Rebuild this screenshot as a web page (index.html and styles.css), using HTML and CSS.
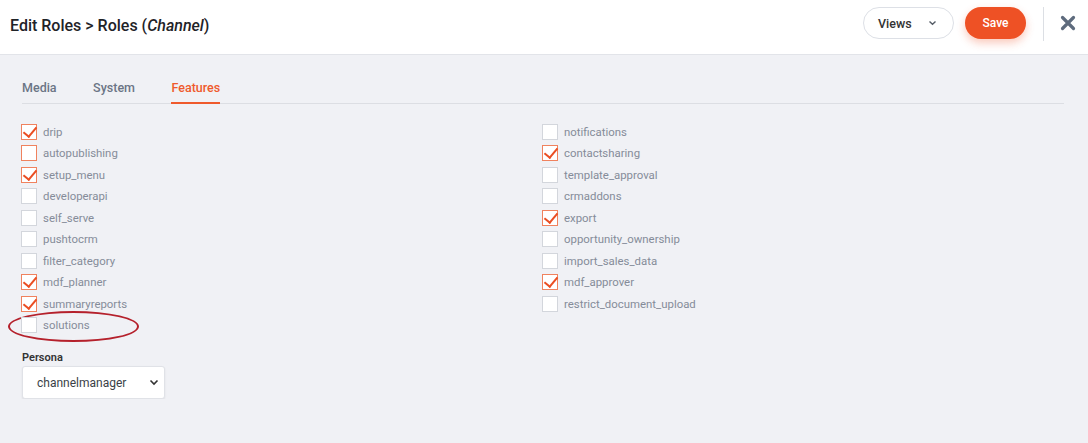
FILE: index.html
```html
<!DOCTYPE html>
<html lang="en">
<head>
    <meta charset="UTF-8">
    <title>Edit Roles</title>
    <link rel="stylesheet" href="styles.css">
</head>
<body>
    <!-- Top bar -->
    <div class="topbar">
        <h1 class="title">Edit Roles &gt; Roles (<em>Channel</em>)</h1>
        <div class="actions">
            <button class="btn-views">Views
                <svg width="9" height="6" viewBox="0 0 9 6"><path d="M1.5 1.5 L4.5 4.3 L7.5 1.5" fill="none" stroke="#555c66" stroke-width="1.4"/></svg>
            </button>
            <button class="btn-save">Save</button>
            <span class="divider"></span>
            <button class="btn-close" aria-label="Close">
                <svg width="16" height="16" viewBox="0 0 16 16"><path d="M2.5 2.5 L13.5 13.5 M13.5 2.5 L2.5 13.5" stroke="#5e6b7d" stroke-width="3.2" stroke-linecap="round"/></svg>
            </button>
        </div>
    </div>

    <div class="content">
        <div class="tabs">
            <a class="tab">Media</a>
            <a class="tab">System</a>
            <a class="tab active">Features</a>
        </div>

        <div class="features">
            <div class="col">
                <label class="feature"><span class="box checked"></span>drip</label>
                <label class="feature"><span class="box focus"></span>autopublishing</label>
                <label class="feature"><span class="box checked"></span>setup_menu</label>
                <label class="feature"><span class="box"></span>developerapi</label>
                <label class="feature"><span class="box"></span>self_serve</label>
                <label class="feature"><span class="box"></span>pushtocrm</label>
                <label class="feature"><span class="box"></span>filter_category</label>
                <label class="feature"><span class="box checked"></span>mdf_planner</label>
                <label class="feature"><span class="box checked"></span>summaryreports</label>
                <label class="feature marked"><span class="box"></span>solutions</label>
            </div>
            <div class="col">
                <label class="feature"><span class="box"></span>notifications</label>
                <label class="feature"><span class="box checked"></span>contactsharing</label>
                <label class="feature"><span class="box"></span>template_approval</label>
                <label class="feature"><span class="box"></span>crmaddons</label>
                <label class="feature"><span class="box checked"></span>export</label>
                <label class="feature"><span class="box"></span>opportunity_ownership</label>
                <label class="feature"><span class="box"></span>import_sales_data</label>
                <label class="feature"><span class="box checked"></span>mdf_approver</label>
                <label class="feature"><span class="box"></span>restrict_document_upload</label>
            </div>
        </div>

        <div class="persona">
            <div class="persona-label">Persona</div>
            <div class="select">
                <span>channelmanager</span>
                <svg width="10" height="7" viewBox="0 0 10 7"><path d="M1.5 1.5 L5 5 L8.5 1.5" fill="none" stroke="#333" stroke-width="1.6"/></svg>
            </div>
        </div>
    </div>
</body>
</html>
```

FILE: styles.css
```css
body {
    margin: 0;
    font-family: Roboto, "Liberation Sans", sans-serif;
    background: #f0f1f5;
    color: #333;
}

/* Top bar */
.topbar {
    height: 54px;
    background: #fff;
    border-bottom: 1px solid #e2e4e9;
    display: flex;
    align-items: center;
    justify-content: space-between;
    padding: 0 12px 0 10px;
}

.title {
    margin: 0;
    font-size: 16px;
    font-weight: 500;
    color: #1f2328;
    position: relative;
    top: -2px;
}

.title em { font-style: italic; }

.actions {
    display: flex;
    align-items: center;
    height: 100%;
}

.btn-views {
    width: 91px;
    height: 32px;
    border: 1px solid #dde0e6;
    border-radius: 16px;
    background: #fff;
    font-family: inherit;
    font-size: 12.5px;
    font-weight: 500;
    color: #333;
    display: flex;
    align-items: center;
    justify-content: space-between;
    padding: 0 16px 0 14px;
    margin-top: -8px;
}

.btn-save {
    width: 61px;
    height: 32px;
    margin-left: 11px;
    margin-top: -8px;
    border: none;
    border-radius: 16px;
    background: #ee5125;
    color: #fff;
    font-family: inherit;
    font-size: 12px;
    font-weight: 500;
    box-shadow: 0 4px 8px rgba(238, 81, 37, 0.3);
}

.divider {
    width: 1px;
    height: 34px;
    background: #dcdfe4;
    margin: -6px 0 0 17px;
}

.btn-close {
    border: none;
    background: none;
    padding: 0;
    margin: -8px 0 0 16px;
    display: flex;
}

/* Main area */
.content {
    padding: 25px 24px 0 21px;
}

.tabs {
    display: flex;
    gap: 36.5px;
    border-bottom: 1px solid #dcdee3;
    margin-left: 1px;
}

.tab {
    font-size: 12.5px;
    font-weight: 500;
    color: #6b7585;
    padding-bottom: 7px;
    border-bottom: 2px solid transparent;
    margin-bottom: -1px;
}

.tab.active {
    color: #ef5a2c;
    border-bottom-color: #ef5a2c;
}

.features {
    display: grid;
    grid-template-columns: 521px 521px;
    margin-top: 17px;
}

.feature {
    display: flex;
    align-items: center;
    height: 21.5px;
    font-size: 11.4px;
    color: #858c99;
    position: relative;
}

.box {
    width: 14px;
    height: 14px;
    border: 1px solid #d3d6dc;
    background: #fff;
    margin-right: 6px;
    position: relative;
    flex-shrink: 0;
}

.box.focus { border-color: #f0825e; }

.box.checked { border-color: #f0825e; }

.box.checked::after {
    content: "";
    position: absolute;
    left: 4px;
    top: -1px;
    width: 6px;
    height: 11px;
    border-right: 2px solid #ea4d22;
    border-bottom: 2px solid #ea4d22;
    transform: rotate(40deg);
}

/* red annotation ring around "solutions" */
.feature.marked::before {
    content: "";
    position: absolute;
    left: -13px;
    top: -4px;
    width: 127px;
    height: 27px;
    border: 2px solid #b5212c;
    border-radius: 50%;
}

.persona {
    margin-top: 15px;
    margin-left: 1px;
}

.persona-label {
    font-size: 11px;
    font-weight: 600;
    color: #333;
    margin-bottom: 2px;
}

.select {
    height: 33px;
    background: #fff;
    border: 1px solid #e0e2e7;
    border-radius: 3px;
    box-shadow: 0 1px 2px rgba(0, 0, 0, 0.08);
    display: flex;
    align-items: center;
    justify-content: space-between;
    padding: 0 5px 0 14px;
    box-sizing: border-box;
    width: 143px;
    font-size: 12px;
    color: #3a3f47;
}
```
